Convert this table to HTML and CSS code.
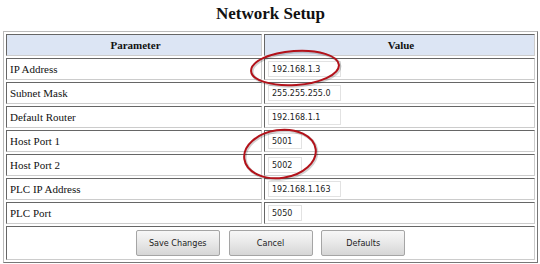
FILE: index.html
```html
<!DOCTYPE html>
<html lang="en">
<head>
  <meta charset="UTF-8">
  <title>Network Setup</title>
  <link rel="stylesheet" href="styles.css">
</head>
<body>
  <div class="page">
    <h1>Network Setup</h1>
    <table class="setup">
      <tr>
        <th class="param">Parameter</th>
        <th>Value</th>
      </tr>
      <tr>
        <td>IP Address</td>
        <td><input type="text" class="wide" value="192.168.1.3"></td>
      </tr>
      <tr>
        <td>Subnet Mask</td>
        <td><input type="text" class="wide" value="255.255.255.0"></td>
      </tr>
      <tr>
        <td>Default Router</td>
        <td><input type="text" class="wide" value="192.168.1.1"></td>
      </tr>
      <tr>
        <td>Host Port 1</td>
        <td><input type="text" class="short" value="5001"></td>
      </tr>
      <tr>
        <td>Host Port 2</td>
        <td><input type="text" class="short" value="5002"></td>
      </tr>
      <tr>
        <td>PLC IP Address</td>
        <td><input type="text" class="wide" value="192.168.1.163"></td>
      </tr>
      <tr>
        <td>PLC Port</td>
        <td><input type="text" class="short" value="5050"></td>
      </tr>
      <tr>
        <td colspan="2" class="actions">
          <button>Save Changes</button>
          <button>Cancel</button>
          <button>Defaults</button>
        </td>
      </tr>
    </table>

    <!-- red marks drawn over the screenshot -->
    <svg class="marks" width="540" height="264" viewBox="0 0 540 264">
      <ellipse cx="296" cy="69" rx="44" ry="17" transform="rotate(-4 296 69)" class="shadow"/>
      <ellipse cx="295" cy="68" rx="44" ry="17" transform="rotate(-4 295 68)" class="ring"/>
      <ellipse cx="281" cy="155" rx="36" ry="24" transform="rotate(-8 281 155)" class="shadow"/>
      <ellipse cx="280" cy="154" rx="36" ry="24" transform="rotate(-8 280 154)" class="ring"/>
    </svg>
  </div>
</body>
</html>
```

FILE: styles.css
```css
* {
  box-sizing: border-box;
}

body {
  margin: 0;
  background: #fff;
  font-family: "Liberation Serif", "Times New Roman", serif;
  color: #111;
}

.page {
  position: relative;
  width: 540px;
  height: 264px;
  padding: 5px 2px 0 3px;
}

h1 {
  margin: 0 0 8px;
  font-size: 17px;
  line-height: 18px;
  text-align: center;
  font-weight: bold;
}

.setup {
  width: 535px;
  table-layout: fixed;
  border-collapse: separate;
  border-spacing: 2px;
  border: 1px solid;
  border-color: #bbb #777 #777 #bbb;
  font-size: 11px;
}

.setup th,
.setup td {
  border: 1px solid;
  border-color: #666 #ccc #ccc #666;
  height: 22px;
  padding: 0 0 0 3px;
  text-align: left;
}

.setup th {
  height: 22px;
  background: #dce5f4;
  text-align: center;
  font-size: 11px;
}

.setup th.param {
  width: 256px;
}

.setup input {
  height: 16px;
  margin: 0;
  padding: 1px 3px;
  border: 1px solid #e2e2e2;
  font-family: "DejaVu Sans", sans-serif;
  font-size: 8px;
  color: #222;
}

.setup input.wide {
  width: 73px;
}

.setup input.short {
  width: 34px;
}

.setup td.actions {
  height: 34px;
  padding: 0;
  text-align: center;
}

.actions button {
  width: 84px;
  height: 26px;
  margin: 0 3px;
  border: 1px solid #a5a5a5;
  border-radius: 2px;
  background: linear-gradient(#f7f7f7, #e8e8e8 50%, #d6d6d6);
  font-family: "DejaVu Sans Condensed", "DejaVu Sans", sans-serif;
  font-size: 9px;
  color: #222;
}

.marks {
  position: absolute;
  top: 0;
  left: 0;
  pointer-events: none;
}

.marks ellipse {
  fill: none;
}

.marks .ring {
  stroke: #b3121a;
  stroke-width: 2;
}

.marks .shadow {
  stroke: rgba(0, 0, 0, 0.18);
  stroke-width: 3;
}
```
